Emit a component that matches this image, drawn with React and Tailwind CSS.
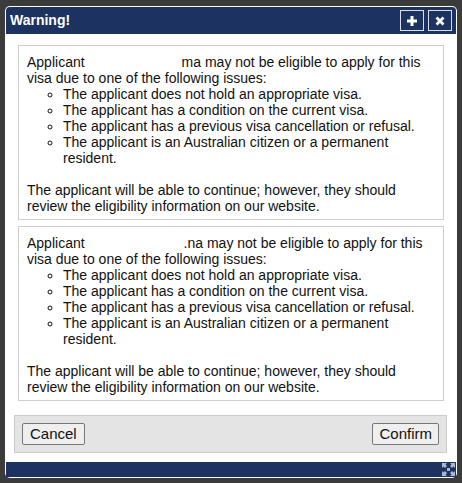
import React from 'react';

const issues = [
  'The applicant does not hold an appropriate visa.',
  'The applicant has a condition on the current visa.',
  'The applicant has a previous visa cancellation or refusal.',
  'The applicant is an Australian citizen or a permanent resident.',
];

function WarningBox({ gap, tail }) {
  return (
    <div className="border border-[#cfcfcf] bg-white pt-2 pb-[5px] pl-2 pr-2 text-[14px] leading-4 text-[#111]">
      <div>
        Applicant<span className="inline-block" style={{ width: gap }} />
        {tail} may not be eligible to apply for this visa due to one of the following issues:
      </div>
      <ul className="mb-4 list-[circle] pl-9">
        {issues.map((t) => (
          <li key={t}>{t}</li>
        ))}
      </ul>
      <div>
        The applicant will be able to continue; however, they should review the eligibility
        information on our website.
      </div>
    </div>
  );
}

export default function App() {
  return (
    <div
      className="w-[462px] h-[483px] bg-[#3b3b3b] pt-[6px] pl-[5px] pr-[5px] pb-[5px]"
      style={{ fontFamily: '"Liberation Sans", Arial, sans-serif' }}
    >
      <div className="flex h-full flex-col rounded-[5px] bg-white p-px">
        {/* title bar */}
        <div className="flex h-[27px] items-center justify-between rounded-t-[4px] bg-[#1c3260] pl-[4px] pr-[4px]">
          <span className="text-[14px] font-bold text-white">Warning!</span>
          <div className="flex gap-[4px]">
            <button className="flex h-[21px] w-[24px] items-center justify-center border border-[#d8dde8] bg-[#1c3260]">
              <svg width="12" height="12" viewBox="0 0 12 12">
                <path d="M6 1v10M1 6h10" stroke="white" strokeWidth="3" />
              </svg>
            </button>
            <button className="flex h-[21px] w-[24px] items-center justify-center border border-[#d8dde8] bg-[#1c3260]">
              <svg width="10" height="10" viewBox="0 0 10 10">
                <path d="M1.5 1.5l7 7M8.5 1.5l-7 7" stroke="white" strokeWidth="2.8" />
              </svg>
            </button>
          </div>
        </div>

        {/* body */}
        <div className="flex flex-1 flex-col pt-[11px]">
          <div className="flex flex-col gap-[6px] px-3">
            <WarningBox gap={97} tail="ma" />
            <WarningBox gap={99} tail=".na" />
          </div>
          <div className="mx-2 mr-[9px] mt-[14px] flex justify-between border border-[#cccccc] bg-[#e4e4e4] px-[7px] pt-[7px] pb-[7px]">
            <button className="h-[22px] rounded-[2px] border border-[#777] bg-[#efefef] px-[7px] text-[15px] leading-4 text-[#111]">
              Cancel
            </button>
            <button className="h-[22px] rounded-[2px] border border-[#777] bg-[#efefef] px-[6px] text-[15px] leading-4 text-[#111]">
              Confirm
            </button>
          </div>
        </div>

        {/* bottom bar */}
        <div className="mt-auto flex h-[15px] items-center justify-end bg-[#1c3260] pr-px">
          <svg width="13" height="13" viewBox="0 0 13 13" fill="#a9b9d3">
            <path d="M0 0h5L3.5 1.5 5 3 3 5 1.5 3.5 0 5z" />
            <path d="M13 0v5L11.5 3.5 10 5 8 3 9.5 1.5 8 0z" />
            <path d="M0 13V8l1.5 1.5L3 8l2 2-1.5 1.5L5 13z" />
            <path d="M13 13H8l1.5-1.5L8 10l2-2 1.5 1.5L13 8z" />
            <rect x="5" y="5" width="3" height="3" />
          </svg>
        </div>
      </div>
    </div>
  );
}
